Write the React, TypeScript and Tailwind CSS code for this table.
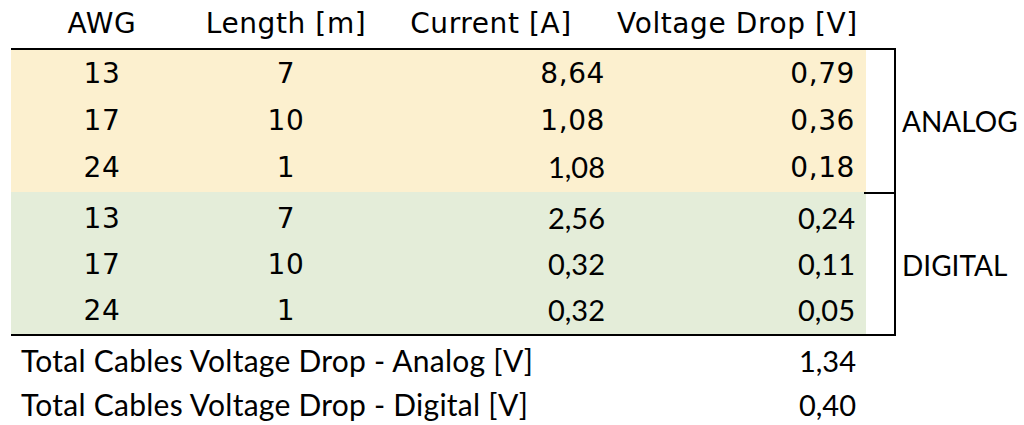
import React from "react";

type Row = { awg: string; len: string; cur: string; vd: string; curC?: boolean; vdC?: boolean };

const analog: Row[] = [
  { awg: "13", len: "7", cur: "8,64", vd: "0,79" },
  { awg: "17", len: "10", cur: "1,08", vd: "0,36" },
  { awg: "24", len: "1", cur: "1,08", vd: "0,18", curC: true },
];

const digital: Row[] = [
  { awg: "13", len: "7", cur: "2,56", vd: "0,24", curC: true, vdC: true },
  { awg: "17", len: "10", cur: "0,32", vd: "0,11", curC: true, vdC: true },
  { awg: "24", len: "1", cur: "0,32", vd: "0,05", curC: true, vdC: true },
];

const AV = "font-['DejaVu_Sans',sans-serif] text-[28px] tracking-[0.6px]";
const CA = "font-['Lato',sans-serif] text-[29px] pb-[4px]";

function DataRow({ r }: { r: Row }) {
  return (
    <div className="grid grid-cols-[182px_186px_230px_257px] flex-1 items-center leading-none">
      <div className={`${AV} text-center`}>{r.awg}</div>
      <div className={`${AV} text-center`}>{r.len}</div>
      <div className={`${r.curC ? CA : AV} text-right pr-[4px]`}>{r.cur}</div>
      <div className={`${r.vdC ? CA : AV} text-right pr-[11px]`}>{r.vd}</div>
    </div>
  );
}

export default function App() {
  return (
    <div className="w-[1024px] h-[425px] bg-white text-black overflow-hidden">
      {/* header */}
      <div className="ml-[11px] w-[855px] h-[48px] grid grid-cols-[182px_186px_230px_257px] items-center leading-none">
        <div className={`${AV} text-center`}>AWG</div>
        <div className={`${AV} text-center`}>Length [m]</div>
        <div className={`${AV} text-center pr-[6px]`}>Current [A]</div>
        <div className={`${AV} text-center`}>Voltage Drop [V]</div>
      </div>

      {/* body */}
      <div className="flex">
        <div className="ml-[11px] w-[885px] border-t-2 border-b-2 border-r-2 border-black">
          <div className="flex h-[142px]">
            <div className="w-[855px] bg-[#fcf0cf] flex flex-col">
              {analog.map((r, i) => (
                <DataRow key={i} r={r} />
              ))}
            </div>
            <div className="flex-1" />
          </div>
          <div className="flex h-[142px]">
            <div className="w-[855px] bg-[#e4edd9] flex flex-col pt-[4px]">
              {digital.map((r, i) => (
                <DataRow key={i} r={r} />
              ))}
            </div>
            <div className="flex-1 border-t-2 border-black -ml-[2px]" />
          </div>
        </div>
        <div className="flex flex-col pt-[2px]">
          <div className="h-[142px] flex items-center pl-[6px] font-['Lato',sans-serif] text-[28px] leading-none">ANALOG</div>
          <div className="h-[142px] flex items-center pl-[6px] pt-[4px] font-['Lato',sans-serif] text-[28px] leading-none">DIGITAL</div>
        </div>
      </div>

      {/* totals */}
      <div className="ml-[11px] w-[855px] flex flex-col font-['Lato',sans-serif] text-[30px] leading-none">
        <div className="h-[44px] flex items-center justify-between pl-[10px] pr-[10px] pt-[4px]">
          <span className="tracking-[0.25px]">Total Cables Voltage Drop - Analog [V]</span>
          <span className="text-[29px]">1,34</span>
        </div>
        <div className="h-[44px] flex items-center justify-between pl-[10px] pr-[10px] pt-[4px]">
          <span className="tracking-[0.25px]">Total Cables Voltage Drop - Digital [V]</span>
          <span className="text-[29px]">0,40</span>
        </div>
      </div>
    </div>
  );
}
